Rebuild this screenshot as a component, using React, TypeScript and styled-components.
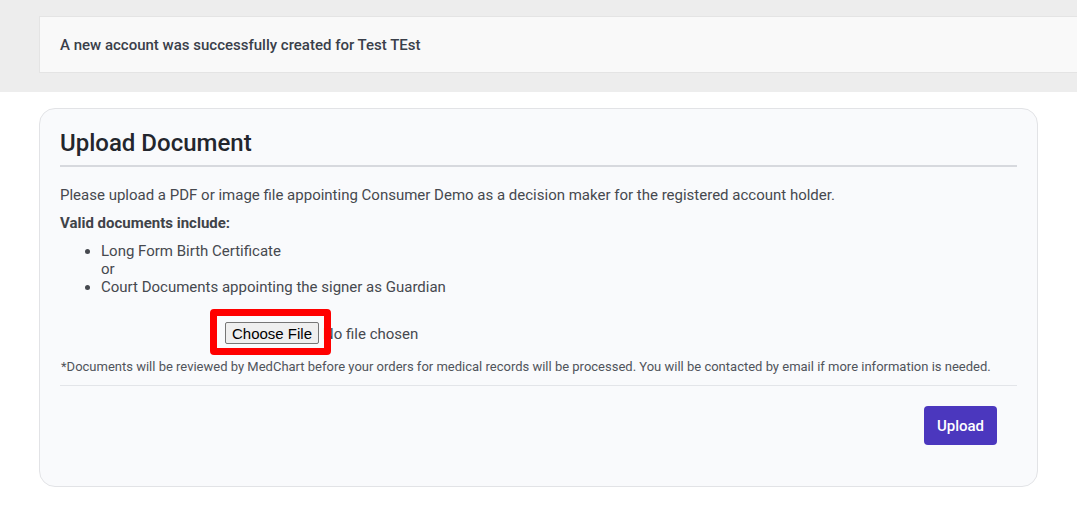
import React from "react";
import styled, { createGlobalStyle } from "styled-components";

const Global = createGlobalStyle`
  html, body { margin: 0; padding: 0; background: #ffffff; }
  body { font-family: Roboto, "Liberation Sans", Arial, sans-serif; }
  * { box-sizing: border-box; }
`;

const Band = styled.div`
  background: #ededed;
  padding: 16px 0 19px 39px;
  overflow: hidden;
`;

const Alert = styled.div`
  height: 57px;
  margin-right: -4px;
  background: #f9f9f9;
  border: 1px solid #e4e4e4;
  display: flex;
  align-items: center;
  padding-left: 20px;
  font-size: 15px;
  font-weight: 500;
  color: #3a3f4a;
`;

const Card = styled.section`
  margin: 16px 39px 0 39px;
  background: #f9fafc;
  border: 1px solid #e2e3e6;
  border-radius: 16px;
  padding: 20px 20px 21px 20px;
`;

const Title = styled.h2`
  margin: 0;
  font-size: 24px;
  line-height: 28px;
  font-weight: 500;
  color: #23262d;
  padding-bottom: 8px;
  border-bottom: 2px solid #d7d9de;
`;

const Para = styled.p<{ $bold?: boolean; $top: number }>`
  margin: ${(p) => p.$top}px 0 0 0;
  font-size: 15px;
  line-height: 22px;
  font-weight: ${(p) => (p.$bold ? 700 : 400)};
  color: ${(p) => (p.$bold ? "#404349" : "#46494f")};
`;

const List = styled.ul`
  margin: 8px 0 0 0;
  padding-left: 41px;
  font-size: 15px;
  line-height: 18px;
  color: #46494f;
`;

const Item = styled.li``;

const Or = styled.div``;

const FileRow = styled.div`
  margin-top: 25px;
  padding-left: 165px;
  height: 24px;
  display: flex;
  align-items: center;
`;

const FileWrap = styled.div`
  position: relative;
  display: inline-block;
`;

const FileInput = styled.input`
  font-family: Roboto, "Liberation Sans", Arial, sans-serif;
  font-size: 15px;
  color: #46494f;
  &::file-selector-button {
    font-family: "Liberation Sans", Arial, sans-serif;
    font-size: 15px;
    color: #000;
    background: #efefef;
    border: 1px solid #767676;
    border-radius: 2px;
    padding: 1px 6px;
    margin-right: 4px;
    height: 22px;
  }
`;

const Highlight = styled.div`
  position: absolute;
  left: -15px;
  top: -13px;
  width: 121px;
  height: 46px;
  border: 7px solid #ff0000;
  border-radius: 4px;
  pointer-events: none;
`;

const Note = styled.p`
  margin: 13px 0 0 1px;
  font-size: 13px;
  line-height: 18px;
  color: #50545b;
`;

const Divider = styled.hr`
  margin: 9px 0 0 0;
  border: none;
  border-top: 1px solid #e3e5e9;
`;

const Actions = styled.div`
  display: flex;
  justify-content: flex-end;
  padding-right: 20px;
  margin-top: 20px;
  margin-bottom: 20px;
`;

const UploadButton = styled.button`
  height: 39px;
  width: 73px;
  border: none;
  border-radius: 4px;
  background: #4b37be;
  color: #ffffff;
  font-family: Roboto, "Liberation Sans", Arial, sans-serif;
  font-size: 15px;
  font-weight: 500;
  cursor: pointer;
`;

export default function App() {
  return (
    <>
      <Global />
      <Band>
        <Alert>A new account was successfully created for Test TEst</Alert>
      </Band>
      <Card>
        <Title>Upload Document</Title>
        <Para $top={17}>
          Please upload a PDF or image file appointing Consumer Demo as a decision maker for the
          registered account holder.
        </Para>
        <Para $top={6} $bold>
          Valid documents include:
        </Para>
        <List>
          <Item>Long Form Birth Certificate</Item>
          <Or>or</Or>
          <Item>Court Documents appointing the signer as Guardian</Item>
        </List>
        <FileRow>
          <FileWrap>
            <FileInput type="file" />
            <Highlight />
          </FileWrap>
        </FileRow>
        <Note>
          *Documents will be reviewed by MedChart before your orders for medical records will be
          processed. You will be contacted by email if more information is needed.
        </Note>
        <Divider />
        <Actions>
          <UploadButton>Upload</UploadButton>
        </Actions>
      </Card>
    </>
  );
}
